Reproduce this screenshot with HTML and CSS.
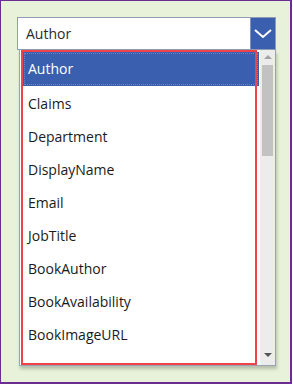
FILE: index.html
```html
<!DOCTYPE html>
<html lang="en">
<head>
    <meta charset="UTF-8">
    <meta name="viewport" content="width=device-width, initial-scale=1.0">
    <title>Field Dropdown</title>
    <link rel="stylesheet" href="styles.css">
</head>
<body>
    <div class="frame">
        <div class="combo">
            <span class="combo-value">Author</span>
            <span class="combo-button">
                <svg width="18" height="10" viewBox="0 0 18 10">
                    <polyline points="1,1 9,8 17,1" fill="none" stroke="#fff" stroke-width="2"/>
                </svg>
            </span>
        </div>

        <div class="list">
            <ul class="items">
                <li class="item selected">Author</li>
                <li class="item">Claims</li>
                <li class="item">Department</li>
                <li class="item">DisplayName</li>
                <li class="item">Email</li>
                <li class="item">JobTitle</li>
                <li class="item">BookAuthor</li>
                <li class="item">BookAvailability</li>
                <li class="item">BookImageURL</li>
            </ul>
            <div class="scrollbar">
                <span class="arrow up"></span>
                <span class="thumb"></span>
                <span class="arrow down"></span>
            </div>
            <div class="highlight-box"></div>
        </div>
    </div>
</body>
</html>
```

FILE: styles.css
```css
body {
    margin: 0;
    font-family: "Open Sans", "Noto Sans", sans-serif;
}
.frame {
    box-sizing: border-box;
    width: 292px;
    height: 384px;
    background: #e8f1da;
    border-left: 1px solid #6b2d8f;
    border-top: 1px solid #6b2d8f;
    border-right: 2px solid #6b2d8f;
    border-bottom: 2px solid #6b2d8f;
    padding: 16px 0 0 16px;
}
.combo {
    box-sizing: border-box;
    width: 259px;
    height: 33px;
    display: flex;
    background: #fff;
    border: 1px solid #8f9cb3;
}
.combo-value {
    flex: 1;
    padding-left: 8px;
    font-size: 14px;
    line-height: 31px;
    color: #2a2a2a;
}
.combo-button {
    width: 24px;
    display: flex;
    align-items: center;
    justify-content: center;
    background: #3a5fae;
    border-left: 1px solid #7f93c4;
}
.list {
    position: relative;
    box-sizing: border-box;
    width: 257px;
    height: 316px;
    margin-left: 2px;
    display: flex;
    background: #fff;
    border: 1px solid #9ba3b2;
    border-top: none;
    box-shadow: 1px 3px 3px rgba(90, 100, 80, 0.35);
}
.items {
    flex: 1;
    list-style: none;
    margin: 0;
    padding: 2px 1px 0 3px;
    overflow: hidden;
}
.item {
    height: 33px;
    line-height: 35px;
    padding-left: 5px;
    font-size: 14px;
    color: #1a1a1a;
    white-space: nowrap;
}
.item.selected {
    height: 34px;
    line-height: 34px;
    background: #3a5fae;
    color: #fff;
    outline: 1px dotted rgba(255, 255, 255, 0.25);
    outline-offset: -2px;
}
.scrollbar {
    width: 15px;
    background: #ececec;
    display: flex;
    flex-direction: column;
    align-items: center;
}
.arrow {
    width: 0;
    height: 0;
    border-left: 4px solid transparent;
    border-right: 4px solid transparent;
}
.arrow.up {
    margin-top: 5px;
    border-bottom: 4px solid #a3a3a3;
}
.arrow.down {
    margin-top: auto;
    margin-bottom: 8px;
    border-top: 4px solid #555;
}
.thumb {
    width: 11px;
    height: 91px;
    margin-top: 6px;
    background: #c2c2c2;
}
.highlight-box {
    position: absolute;
    left: 1px;
    top: 0;
    width: 236px;
    height: 315px;
    box-sizing: border-box;
    border: 2px solid #f0424a;
    pointer-events: none;
}
```
